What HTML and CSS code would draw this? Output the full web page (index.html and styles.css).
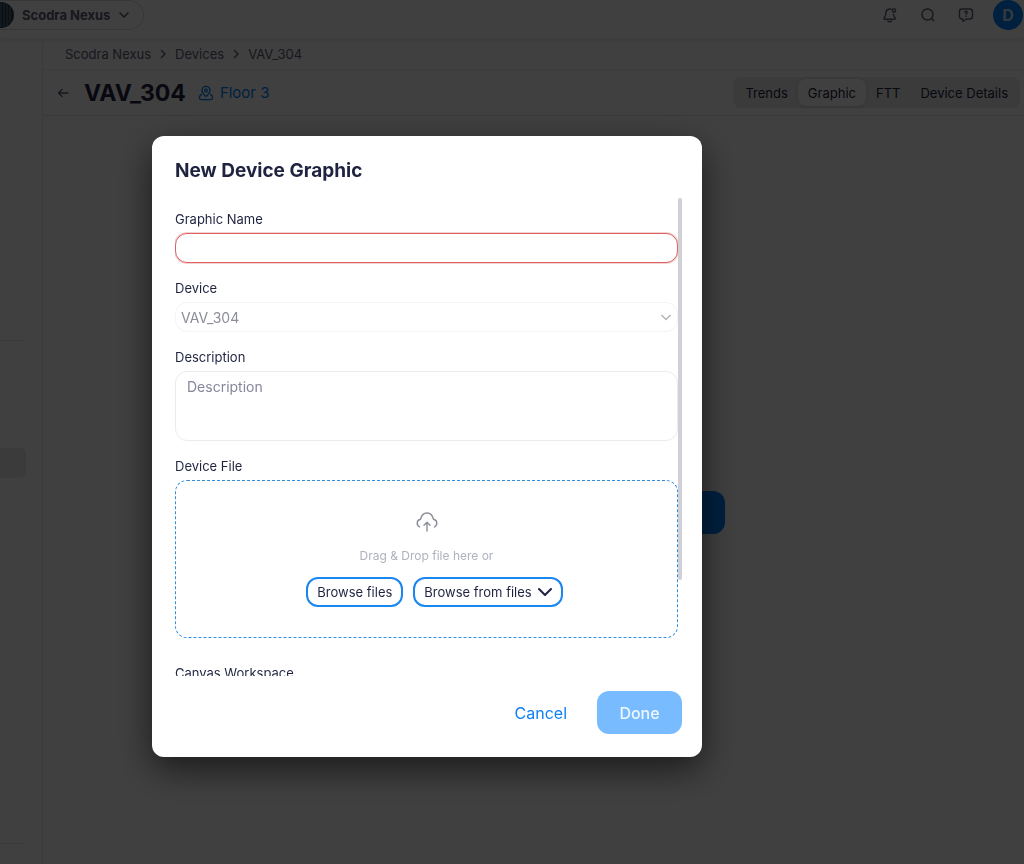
FILE: index.html
```html
<!DOCTYPE html>
<html lang="en">
<head>
    <meta charset="UTF-8">
    <meta name="viewport" content="width=device-width, initial-scale=1.0">
    <title>VAV_304 - Scodra Nexus</title>
    <link rel="stylesheet" href="styles.css">
</head>
<body>
    <div class="page">
        <header class="topbar">
            <button class="site-picker" type="button">
                <svg class="site-logo" width="26" height="26" viewBox="0 0 26 26">
                    <circle cx="13" cy="13" r="13" fill="#2b3c50"/>
                    <path d="M13 1v24M16 1v24M19 2v22M22 5v16" stroke="#6b8296" stroke-width="1"/>
                </svg>
                <span>Scodra Nexus</span>
                <svg width="12" height="12" viewBox="0 0 12 12" fill="none" stroke="currentColor" stroke-width="1.6" stroke-linecap="round" stroke-linejoin="round"><path d="M2 4l4 4 4-4"/></svg>
            </button>
            <div class="topbar-actions">
                <button class="icon-btn" type="button" aria-label="Notifications">
                    <svg width="16" height="16" viewBox="0 0 16 16" fill="none" stroke="currentColor" stroke-width="1.4" stroke-linecap="round" stroke-linejoin="round">
                        <path d="M9 2.200C6 1.200 3.800 3.600 3.800 6.200c0 2.600-.7 3.600-1.600 4.600-.5.600-.2 1.400.6 1.400h9.600c.8 0 1.100-.8.600-1.400-.8-.9-1.300-1.700-1.500-3.300"/>
                        <circle cx="12" cy="3.600" r="1.700"/>
                        <path d="M5.800 14.200c1.200.8 2.500.8 3.700 0"/>
                    </svg>
                </button>
                <button class="icon-btn" type="button" aria-label="Search">
                    <svg width="16" height="16" viewBox="0 0 16 16" fill="none" stroke="currentColor" stroke-width="1.400" stroke-linecap="round"><circle cx="7.500" cy="7.500" r="5.500"/><path d="M11.600 11.600l2.200 2.200"/></svg>
                </button>
                <button class="icon-btn" type="button" aria-label="Help">
                    <svg width="16" height="16" viewBox="0 0 16 16" fill="none" stroke="currentColor" stroke-width="1.400" stroke-linecap="round" stroke-linejoin="round">
                        <path d="M4 2h8a2.500 2.500 0 0 1 2.500 2.500v5A2.500 2.500 0 0 1 12 12H8.500l-2.900 2c-.4.300-.8 0-.8-.4V12H4a2.500 2.500 0 0 1-2.500-2.500v-5A2.500 2.500 0 0 1 4 2z"/>
                        <path d="M6.700 5.300c.2-1.400 2.700-1.300 2.600.2C9.200 6.400 8 6.500 8 7.500M8 9.300v.1"/>
                    </svg>
                </button>
                <button class="avatar" type="button">D</button>
            </div>
        </header>

        <div class="layout">
            <aside class="sidebar">
                <div class="sidebar-section"></div>
                <div class="sidebar-section sidebar-nav">
                    <div class="sidebar-active"></div>
                </div>
            </aside>

            <main class="main">
                <nav class="breadcrumb">
                    <a href="#">Scodra Nexus</a>
                    <svg width="8" height="10" viewBox="0 0 8 10" fill="none" stroke="currentColor" stroke-width="1.400"><path d="M2 1l4 4-4 4"/></svg>
                    <a href="#">Devices</a>
                    <svg width="8" height="10" viewBox="0 0 8 10" fill="none" stroke="currentColor" stroke-width="1.400"><path d="M2 1l4 4-4 4"/></svg>
                    <a href="#">VAV_304</a>
                </nav>

                <div class="title-row">
                    <button class="back-btn" type="button" aria-label="Back">
                        <svg width="12" height="12" viewBox="0 0 12 12" fill="none" stroke="currentColor" stroke-width="1.300" stroke-linecap="round" stroke-linejoin="round"><path d="M11 6H1.500M5 2.500L1.500 6 5 9.500"/></svg>
                    </button>
                    <h1>VAV_304</h1>
                    <a class="floor-link" href="#">
                        <svg width="16" height="16" viewBox="0 0 16 16" fill="none" stroke="currentColor" stroke-width="1.300" stroke-linejoin="round" stroke-linecap="round">
                            <path d="M8 11.500C5.800 9.600 4 7.700 4 5.300a4 4 0 0 1 8 0c0 2.400-1.800 4.300-4 6.200z"/>
                            <circle cx="8" cy="5.500" r="1.300"/>
                            <path d="M3.400 9.400C2 10.400 1.200 11.700 1.400 13c.2 1.200 1 1.700 2.200 1.700h8.800c1.200 0 2-.5 2.200-1.700.2-1.300-.6-2.600-2-3.600"/>
                        </svg>
                        <span>Floor 3</span>
                    </a>
                    <div class="tabs">
                        <button class="tab" type="button">Trends</button>
                        <button class="tab active" type="button">Graphic</button>
                        <button class="tab" type="button">FTT</button>
                        <button class="tab" type="button">Device Details</button>
                    </div>
                </div>

                <div class="empty-state">
                    <button class="add-btn" type="button" aria-label="New Device Graphic"></button>
                </div>
            </main>
        </div>
    </div>

    <div class="overlay">
        <form class="modal" role="dialog" aria-labelledby="modalTitle">
            <h2 id="modalTitle">New Device Graphic</h2>

            <div class="modal-content">
                <div class="modal-scroll">
                    <div class="field">
                        <label for="graphicName">Graphic Name</label>
                        <input class="control invalid" type="text" id="graphicName">
                    </div>
                    <div class="field">
                        <label for="device">Device</label>
                        <div class="select-wrap">
                            <select class="control" id="device" disabled>
                                <option>VAV_304</option>
                            </select>
                            <svg class="select-arrow" width="12" height="12" viewBox="0 0 12 12" fill="none" stroke="currentColor" stroke-width="1.500"><path d="M1.500 4L6 8.500 10.500 4"/></svg>
                        </div>
                    </div>
                    <div class="field">
                        <label for="description">Description</label>
                        <textarea class="control" id="description" placeholder="Description"></textarea>
                    </div>
                    <div class="field">
                        <span class="label">Device File</span>
                        <div class="dropzone">
                            <svg width="22" height="20" viewBox="0 0 22 20" fill="none" stroke="currentColor" stroke-width="1.400" stroke-linecap="round" stroke-linejoin="round">
                                <path d="M3.600 15C-.2 12.600.8 8 4.500 7.300 5.300 3.600 7.800 1 11 1s5.700 2.600 6.500 6.300c3.700.7 4.700 5.300.9 7.700"/>
                                <path d="M11 19v-8.500M8 13.200l3-3 3 3"/>
                            </svg>
                            <p>Drag &amp; Drop file here or</p>
                            <div class="dropzone-actions">
                                <button class="outline-btn" type="button">Browse files</button>
                                <button class="outline-btn" type="button">
                                    Browse from files
                                    <svg width="14" height="10" viewBox="0 0 14 10" fill="none" stroke="currentColor" stroke-width="2" stroke-linecap="round" stroke-linejoin="round"><path d="M1 2l6 6 6-6"/></svg>
                                </button>
                            </div>
                        </div>
                    </div>
                    <div class="field workspace-field">
                        <label for="workspace">Canvas Workspace</label>
                        <select class="control" id="workspace"></select>
                    </div>
                </div>
                <div class="scroll-thumb"></div>
            </div>

            <div class="modal-footer">
                <button class="cancel-btn" type="button">Cancel</button>
                <button class="done-btn" type="submit" disabled>Done</button>
            </div>
        </form>
    </div>
</body>
</html>
```

FILE: styles.css
```css
* {
    box-sizing: border-box;
}
body {
    margin: 0;
    font-family: Inter, "Liberation Sans", sans-serif;
    font-size: 13px;
    color: #1f2340;
    background: #fff;
    overflow: hidden;
}
button, input, select, textarea {
    font: inherit;
    color: inherit;
}
button {
    border: none;
    background: none;
    padding: 0;
    cursor: pointer;
}
a {
    color: inherit;
    text-decoration: none;
}
svg {
    flex-shrink: 0;
}
h1, h2, p {
    margin: 0;
}

/* Page */
.page {
    display: flex;
    flex-direction: column;
    height: 100vh;
}
.topbar {
    display: flex;
    align-items: center;
    justify-content: space-between;
    height: 38px;
    padding-bottom: 9px;
    box-shadow: 0 1px 6px rgba(0, 0, 0, 0.15);
}
.site-picker {
    display: flex;
    align-items: center;
    gap: 8px;
    height: 30px;
    margin-left: -12px;
    padding-right: 13px;
    border: 1px solid #d3dce4;
    border-left: none;
    border-radius: 15px;
    font-weight: 700;
    color: #5c6075;
}
.topbar-actions {
    display: flex;
    align-items: center;
    gap: 22px;
}
.icon-btn {
    display: flex;
    color: #5c6075;
}
.avatar {
    width: 30px;
    height: 30px;
    margin-right: 1px;
    margin-left: -3px;
    border-radius: 50%;
    background: #0080ff;
    color: #d8e4f0;
    font-size: 16px;
    font-weight: 700;
}
.layout {
    display: flex;
    flex: 1;
}
.sidebar {
    display: flex;
    flex-direction: column;
    width: 43px;
    padding: 0 16px 20px 0;
    border-right: 1px solid #e6e6e6;
}
.sidebar-section {
    border-bottom: 1px solid #e6e6e6;
    flex: 3;
}
.sidebar-nav {
    flex: 5;
}
.sidebar-active {
    height: 30px;
    margin-top: 107px;
    background: #ebebeb;
    border-radius: 0 6px 6px 0;
}
.main {
    display: flex;
    flex-direction: column;
    flex: 1;
}
.breadcrumb {
    display: flex;
    align-items: center;
    gap: 8px;
    height: 32px;
    padding-left: 22px;
    border-bottom: 1px solid #ebebeb;
    color: #5c6075;
}
.title-row {
    display: flex;
    align-items: center;
    height: 46px;
    padding: 0 4px 0 14px;
    border-bottom: 1px solid #e6e6e6;
}
.back-btn {
    display: flex;
    margin-right: 15px;
    color: #5c6075;
}
h1 {
    font-size: 23px;
    font-weight: 700;
}
.floor-link {
    display: flex;
    align-items: center;
    gap: 6px;
    margin-left: 12px;
    font-size: 15px;
    color: #0080ff;
}
.tabs {
    display: flex;
    margin-left: auto;
    padding: 2px;
    border-radius: 8px;
    background: #ebebeb;
}
.tab {
    height: 27px;
    padding: 0 10px;
    border-radius: 8px;
}
.tab.active {
    background: #fff;
    box-shadow: 0 1px 4px rgba(0, 0, 0, 0.15);
}
.empty-state {
    display: flex;
    align-items: center;
    justify-content: flex-end;
    flex: 1;
    padding: 44px 299px 0 0;
}
.add-btn {
    width: 200px;
    height: 43px;
    border-radius: 12px;
    background: #0080ff;
}

/* Dialog */
.overlay {
    position: fixed;
    inset: 0;
    display: flex;
    align-items: center;
    justify-content: center;
    padding: 29px 170px 0 0;
    background: rgba(0, 0, 0, 0.75);
}
.modal {
    display: flex;
    flex-direction: column;
    width: 550px;
    max-height: calc(100vh - 243px);
    padding: 20px 20px 23px 23px;
    border-radius: 12px;
    background: #fff;
    box-shadow: 0 12px 36px rgba(0, 0, 0, 0.6);
}
h2 {
    margin-bottom: 12px;
    font-size: 19px;
    font-weight: 700;
    line-height: 30px;
}
.modal-content {
    position: relative;
    display: flex;
    flex: 1;
    min-height: 0;
}
.modal-scroll {
    flex: 1;
    padding: 11px 4px 0 0;
    overflow-y: auto;
    scrollbar-width: none;
}
.scroll-thumb {
    position: absolute;
    top: 0;
    right: 0;
    width: 4px;
    height: 80%;
    border-radius: 2px;
    background: #d0d0d6;
}
.field {
    display: flex;
    flex-direction: column;
    gap: 4px;
    margin-bottom: 15px;
}
.workspace-field {
    margin-top: 25px;
}
label, .label {
    line-height: 20px;
}
.control {
    width: 100%;
    height: 30px;
    padding: 0 11px;
    border: 1px solid #ebebef;
    border-radius: 12px;
    background: #fff;
    font-size: 14px;
    outline: none;
}
.control.invalid {
    border-color: #dc6262;
    box-shadow: 0 0 0 1px rgba(220, 98, 98, 0.3);
}
.select-wrap {
    position: relative;
}
select.control {
    display: block;
    appearance: none;
    padding: 0 5px;
    color: #8b8d98;
    opacity: 1;
}
#device {
    border-color: #f4f4f6;
}
.select-arrow {
    position: absolute;
    top: 9px;
    right: 6px;
    color: #b4b5bc;
    pointer-events: none;
}
textarea.control {
    height: 70px;
    padding-top: 6px;
    resize: none;
}
textarea::placeholder {
    color: #85879a;
}
.dropzone {
    display: flex;
    flex-direction: column;
    align-items: center;
    height: 158px;
    padding-top: 31px;
    border: 1px dashed #2f8de4;
    border-radius: 12px;
    color: #8b8d98;
}
.dropzone p {
    margin: 14px 0 11px;
    font-size: 12px;
    line-height: 20px;
    color: #b0b2bd;
}
.dropzone-actions {
    display: flex;
    gap: 10px;
    padding-left: 16px;
}
.outline-btn {
    display: flex;
    align-items: center;
    gap: 6px;
    height: 30px;
    padding: 0 9px;
    border: 2px solid #1a86f0;
    border-radius: 12px;
    color: #1f2340;
}
.modal-footer {
    display: flex;
    justify-content: flex-end;
    gap: 8px;
    padding-top: 15px;
    font-size: 16px;
}
.cancel-btn {
    padding: 0 22px;
    color: #0f80f5;
}
.done-btn {
    width: 85px;
    height: 43px;
    border-radius: 12px;
    background: #78bbff;
    color: #eef6ff;
    font-weight: 500;
}
```
